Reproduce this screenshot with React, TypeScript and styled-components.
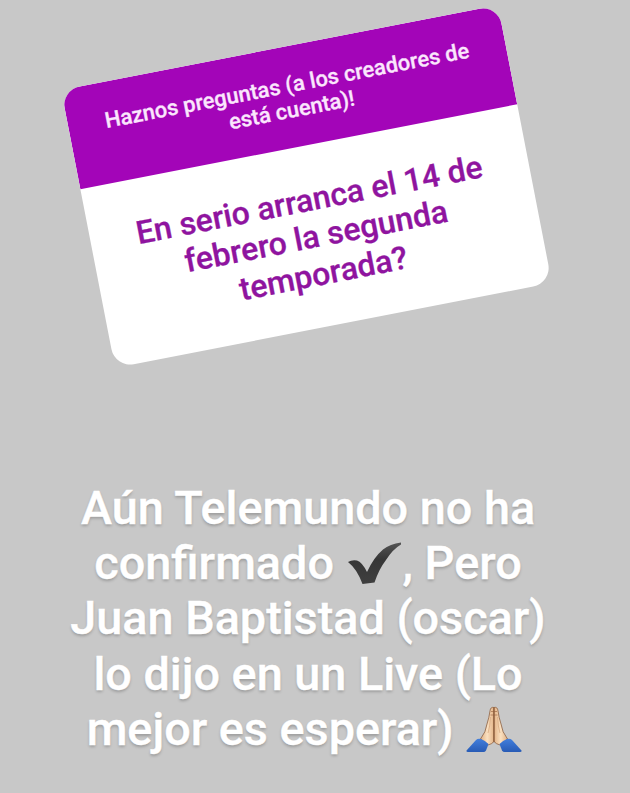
import styled, { createGlobalStyle } from "styled-components";

const theme = {
  background: "#c8c8c8",
  purple: "#a305b8",
  purpleText: "#8f149f",
  white: "#ffffff",
};

const GlobalStyle = createGlobalStyle`
  * {
    box-sizing: border-box;
  }

  body {
    margin: 0;
    background: ${theme.background};
    font-family: Roboto, "Noto Sans", sans-serif;
    font-weight: 500;
  }
`;

const Story = styled.main`
  display: flex;
  flex-direction: column;
  align-items: center;
  width: 630px;
  height: 793px;
  padding-top: 45px;
  padding-right: 17px;
  overflow: hidden;
  background: ${theme.background};
`;

const QuestionCard = styled.section`
  width: 445px;
  height: 283px;
  flex-shrink: 0;
  border-radius: 19px;
  overflow: hidden;
  background: ${theme.white};
  transform: rotate(-11deg);
`;

const Prompt = styled.header`
  height: 101px;
  padding-top: 26px;
  background: ${theme.purple};
  color: #fbe6fd;
  font-size: 21.9px;
  line-height: 25px;
  text-align: center;
  white-space: nowrap;
  -webkit-text-stroke: 0.3px #fbe6fd;
`;

const Question = styled.p`
  margin: 0;
  padding-top: 36px;
  color: ${theme.purpleText};
  font-size: 32px;
  line-height: 37.3px;
  text-align: center;
  white-space: nowrap;
  -webkit-text-stroke: 0.3px ${theme.purpleText};
`;

const Answer = styled.p`
  margin: 153px 0 0;
  padding-left: 3px;
  color: ${theme.white};
  font-size: 46.75px;
  line-height: 55.2px;
  text-align: center;
  white-space: nowrap;
  text-shadow: 0 2px 3px rgba(0, 0, 0, 0.22);
  -webkit-text-stroke: 0.4px ${theme.white};
`;

const Emoji = styled.svg<{ $trailing?: number }>`
  display: inline-block;
  width: 56px;
  height: 48px;
  margin-left: 1px;
  margin-right: ${({ $trailing = 0 }) => $trailing}px;
  vertical-align: -9px;
`;

const CheckMark = () => (
  <Emoji viewBox="0 0 56 48" aria-label="✔">
    <defs>
      <linearGradient id="check" x1="0" y1="0" x2="0" y2="1">
        <stop offset="0" stopColor="#555" />
        <stop offset="0.4" stopColor="#363636" />
        <stop offset="1" stopColor="#3f3f3f" />
      </linearGradient>
    </defs>
    <path
      d="M1 22 Q5 19.500 10 20.500 Q15 22 20 32 Q27 17 36 9.500 Q43 4 54 2.500 L54 4.500 Q46 9 39 20 Q32 29 27.500 42.500 L15.500 44 Q10 29 1 22Z"
      fill="url(#check)"
    />
  </Emoji>
);

const FoldedHands = () => (
  <Emoji viewBox="0 0 56 48" aria-label="🙏🏼" $trailing={7}>
    <defs>
      <linearGradient id="skin" x1="0" y1="0" x2="1" y2="0">
        <stop offset="0" stopColor="#dfb084" />
        <stop offset="0.5" stopColor="#fae0c0" />
        <stop offset="1" stopColor="#e3b387" />
      </linearGradient>
      <linearGradient id="sleeve" x1="0" y1="0" x2="0" y2="1">
        <stop offset="0" stopColor="#427fdd" />
        <stop offset="1" stopColor="#285bb5" />
      </linearGradient>
    </defs>
    <g id="hand">
      <path
        d="M28 1.500 Q24.500 0.500 24 5 Q23 12 21 18 Q20 26 14.500 33 L22 39 Q26 38 28 35.500Z"
        fill="url(#skin)"
        stroke="#8d6040"
        strokeWidth="0.8"
      />
      <path d="M25 5.500 H28 M24.500 9 H28" stroke="#a87550" strokeWidth="0.8" />
      <path d="M24.500 11 Q24 21 22 27" fill="none" stroke="#d5a67c" strokeWidth="0.7" />
      <path d="M0.500 44.500 L10 34 Q12 32 15 33 Q19 34.500 22.500 38 L20 44.500 Q19 46 17.500 46 H2 Q0 46 0.500 44.500Z" fill="url(#sleeve)" />
    </g>
    <use href="#hand" transform="matrix(-1 0 0 1 56 0)" />
    <path d="M28 2 V36" stroke="#855536" strokeWidth="0.9" />
  </Emoji>
);

const App = () => {
  return (
    <>
      <GlobalStyle />
      <Story>
        <QuestionCard>
          <Prompt>
            Haznos preguntas (a los creadores de
            <br />
            está cuenta)!
          </Prompt>
          <Question>
            En serio arranca el 14 de
            <br />
            febrero la segunda
            <br />
            temporada?
          </Question>
        </QuestionCard>
        <Answer>
          Aún Telemundo no ha
          <br />
          confirmado <CheckMark />, Pero
          <br />
          Juan Baptistad (oscar)
          <br />
          lo dijo en un Live (Lo
          <br />
          mejor es esperar) <FoldedHands />
        </Answer>
      </Story>
    </>
  );
};

export default App;
